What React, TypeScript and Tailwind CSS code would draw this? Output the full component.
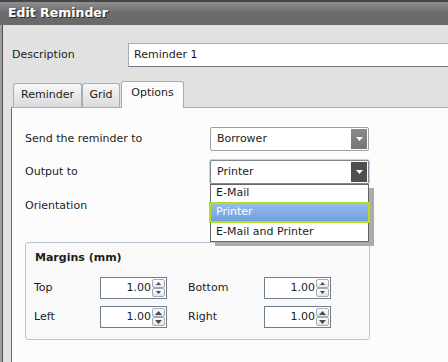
import React from "react";

function Caret({ className = "" }: { className?: string }) {
  return (
    <svg width="7" height="4" viewBox="0 0 7 4" className={className}>
      <path d="M0 0h7L3.5 4z" fill="currentColor" />
    </svg>
  );
}

function Select({ value, focused }: { value: string; focused?: boolean }) {
  return (
    <div
      className={`relative w-[159px] h-[24px] bg-white border rounded-[2px] flex items-center pl-[6px] ${
        focused
          ? "border-[#7f8790] shadow-[0_0_0_1px_#b9d5f3]"
          : "border-[#a0a0a0]"
      }`}
    >
      {value}
      <div
        className={`absolute right-[1px] top-[1px] bottom-[1px] w-[16px] flex items-center justify-center text-white ${
          focused ? "bg-[#4f4f4f]" : "bg-gradient-to-b from-[#8a8a8a] to-[#767676]"
        }`}
      >
        <Caret />
      </div>
    </div>
  );
}

function SpinBtn({ up, hover }: { up?: boolean; hover?: boolean }) {
  return (
    <div className="w-[13px] h-[9px] rounded-[2px] border border-[#a3abb3] bg-gradient-to-b from-white to-[#e2e4e7] flex items-center justify-center text-[#4a4a4a]">
      <svg width={hover ? 7 : 5} height={hover ? 4 : 3} viewBox="0 0 7 4">
        <path d={up ? "M0 4h7L3.5 0z" : "M0 0h7L3.5 4z"} fill="currentColor" />
      </svg>
    </div>
  );
}

function Spin({ hover }: { hover?: boolean }) {
  return (
    <div className="w-[67px] h-[22px] bg-white border border-[#6d7d8c] flex items-center justify-end pr-[1px]">
      <span className="mr-[1px]">1.00</span>
      <div className="flex flex-col">
        <SpinBtn up hover={hover} />
        <SpinBtn hover={hover} />
      </div>
    </div>
  );
}

export default function App() {
  return (
    <div className="w-[448px] h-[362px] overflow-hidden flex flex-col bg-[#e1e1e1] text-[11px] text-[#1c1c1c] font-['DejaVu_Sans',sans-serif]">
      {/* Title bar */}
      <div className="h-[25px] shrink-0 border-t-2 border-[#464646] bg-gradient-to-b from-[#909090] via-[#6c6c6c] via-45% to-[#696969] pl-[8px] flex items-center">
        <span className="text-white font-bold text-[12.5px] [text-shadow:1px_1px_0_#2b2b2b]">
          Edit Reminder
        </span>
      </div>

      <div className="flex-1 flex">
        {/* window edge */}
        <div className="w-[2px] bg-[#9d9d9d]" />
        <div className="w-[1px] bg-[#525252]" />

        <div className="flex-1 flex flex-col">
          {/* Description */}
          <div className="mt-[18px] flex items-center h-[24px]">
            <span className="w-[125px] pl-[9px]">Description</span>
            <div className="flex-1 h-[24px] bg-white border-t border-b border-l border-t-[#a3acb5] border-b-[#6f7b87] border-l-[#a3acb5] flex items-center pl-[5px]">
              Reminder 1
            </div>
          </div>

          {/* Tabs */}
          <div className="mt-[14px] h-[26px] flex items-end pl-[10px]">
            <div className="w-[69px] h-[24px] border border-b-0 border-[#a5adb5] rounded-t-[3px] bg-gradient-to-b from-[#f7f7f7] to-[#d9dbdd] flex items-center justify-center">
              Reminder
            </div>
            <div className="w-[38px] h-[24px] border border-b-0 border-[#a5adb5] rounded-t-[3px] bg-gradient-to-b from-[#f7f7f7] to-[#d9dbdd] flex items-center justify-center">
              Grid
            </div>
            <div className="relative z-10 ml-[1px] -mb-[1px] w-[63px] h-[27px] border border-b-0 border-[#a5adb5] rounded-t-[3px] bg-[#fcfcfc] flex items-center justify-center pb-[3px]">
              Options
            </div>
          </div>

          {/* Panel */}
          <div className="flex-1 ml-[8px] border-t border-l border-t-[#a3adb7] border-l-[#6e6e6e] bg-[#fcfcfc] pt-[19px] pl-[13px]">
            <div className="flex items-center h-[24px]">
              <span className="w-[185px]">Send the reminder to</span>
              <Select value="Borrower" />
            </div>

            <div className="mt-[9px] flex items-center h-[24px]">
              <span className="w-[185px]">Output to</span>
              <div className="relative z-20">
                <Select value="Printer" focused />
                {/* open list */}
                <div className="absolute left-0 top-[24px] w-[159px] h-[58px] bg-white border border-[#666] shadow-[5px_4px_0_#ababab] flex flex-col">
                  <div className="h-[17px] pl-[5px] flex items-center">E-Mail</div>
                  <div className="-mx-[2px] h-[21px] border-2 border-[#b3e01d] bg-gradient-to-b from-[#97bdec] to-[#6d9fdf] text-white pl-[5px] flex items-center">
                    Printer
                  </div>
                  <div className="h-[18px] pl-[5px] flex items-center">E-Mail and Printer</div>
                </div>
              </div>
            </div>

            <div className="mt-[10px] flex items-center h-[24px]">
              <span className="w-[185px]">Orientation</span>
            </div>

            {/* Margins group */}
            <div className="mt-[24px] w-[345px] h-[98px] border border-[#b7c5d3] rounded-[3px] bg-[#f9f9f9]">
              <div className="pt-[8px] pl-[9px] h-[22px] font-bold leading-[14px]">Margins (mm)</div>
              <div className="mt-[12px] flex items-center h-[22px] pl-[8px]">
                <span className="w-[66px]">Top</span>
                <Spin />
                <span className="ml-[21px] w-[76px]">Bottom</span>
                <Spin />
              </div>
              <div className="mt-[7px] flex items-center h-[22px] pl-[8px]">
                <span className="w-[66px]">Left</span>
                <Spin hover />
                <span className="ml-[21px] w-[76px]">Right</span>
                <Spin hover />
              </div>
            </div>
          </div>
        </div>
      </div>
    </div>
  );
}
